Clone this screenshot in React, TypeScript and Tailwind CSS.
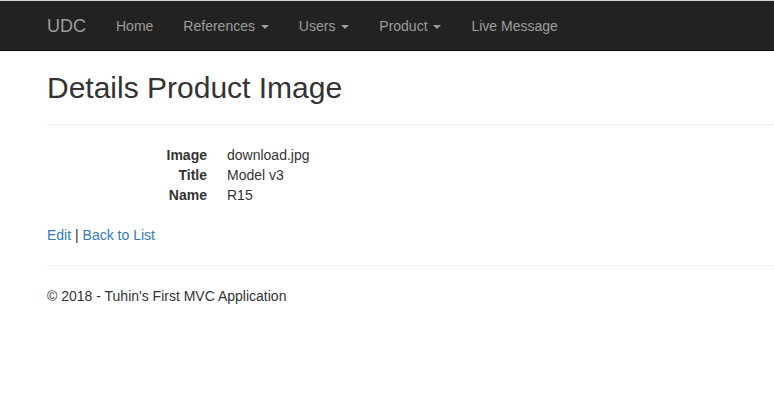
import React from 'react';

const Caret = () => (
  <span className="inline-block ml-[2px] align-middle w-0 h-0 border-t-[4px] border-t-[#9d9d9d] border-x-[4px] border-x-transparent" />
);

const navItems: { label: string; dropdown?: boolean }[] = [
  { label: 'Home' },
  { label: 'References', dropdown: true },
  { label: 'Users', dropdown: true },
  { label: 'Product', dropdown: true },
  { label: 'Live Message' },
];

const details: [string, string][] = [
  ['Image', 'download.jpg'],
  ['Title', 'Model v3'],
  ['Name', 'R15'],
];

export default function App() {
  return (
    <div className="min-h-[415px] bg-white text-[#333] text-[14px] leading-[20px] font-['Liberation_Sans',Arial,sans-serif] overflow-hidden">
      <div className="h-px bg-[#d4d4d4]" />
      {/* NAVBAR */}
      <nav className="h-[50px] bg-[#222] border-b border-[#080808] flex items-stretch pl-[32px] w-[1234px]">
        <a className="px-[15px] text-[18px] leading-[20px] py-[15px] text-[#9d9d9d]">UDC</a>
        <ul className="flex">
          {navItems.map((item) => (
            <li key={item.label}>
              <a className="block px-[15px] py-[15px] text-[#9d9d9d] whitespace-nowrap">
                {item.label}
                {item.dropdown && (
                  <>
                    {' '}
                    <Caret />
                  </>
                )}
              </a>
            </li>
          ))}
        </ul>
      </nav>

      {/* BODY */}
      <div className="pl-[47px] w-[1234px]">
        <h2 className="mt-[20px] mb-[10px] text-[30px] leading-[33px] font-medium">Details Product Image</h2>
        <hr className="my-[20px] border-0 border-t border-[#eee]" />
        <dl className="mb-[20px]">
          {details.map(([k, v]) => (
            <div key={k} className="flex">
              <dt className="w-[160px] text-right font-bold">{k}</dt>
              <dd className="ml-[20px]">{v}</dd>
            </div>
          ))}
        </dl>
        <p className="mb-[10px]">
          <a className="text-[#337ab7]">Edit</a> | <a className="text-[#337ab7]">Back to List</a>
        </p>
        <hr className="my-[20px] border-0 border-t border-[#eee]" />
        <footer>
          <p className="mb-[10px]">© 2018 - Tuhin's First MVC Application</p>
        </footer>
      </div>
    </div>
  );
}
